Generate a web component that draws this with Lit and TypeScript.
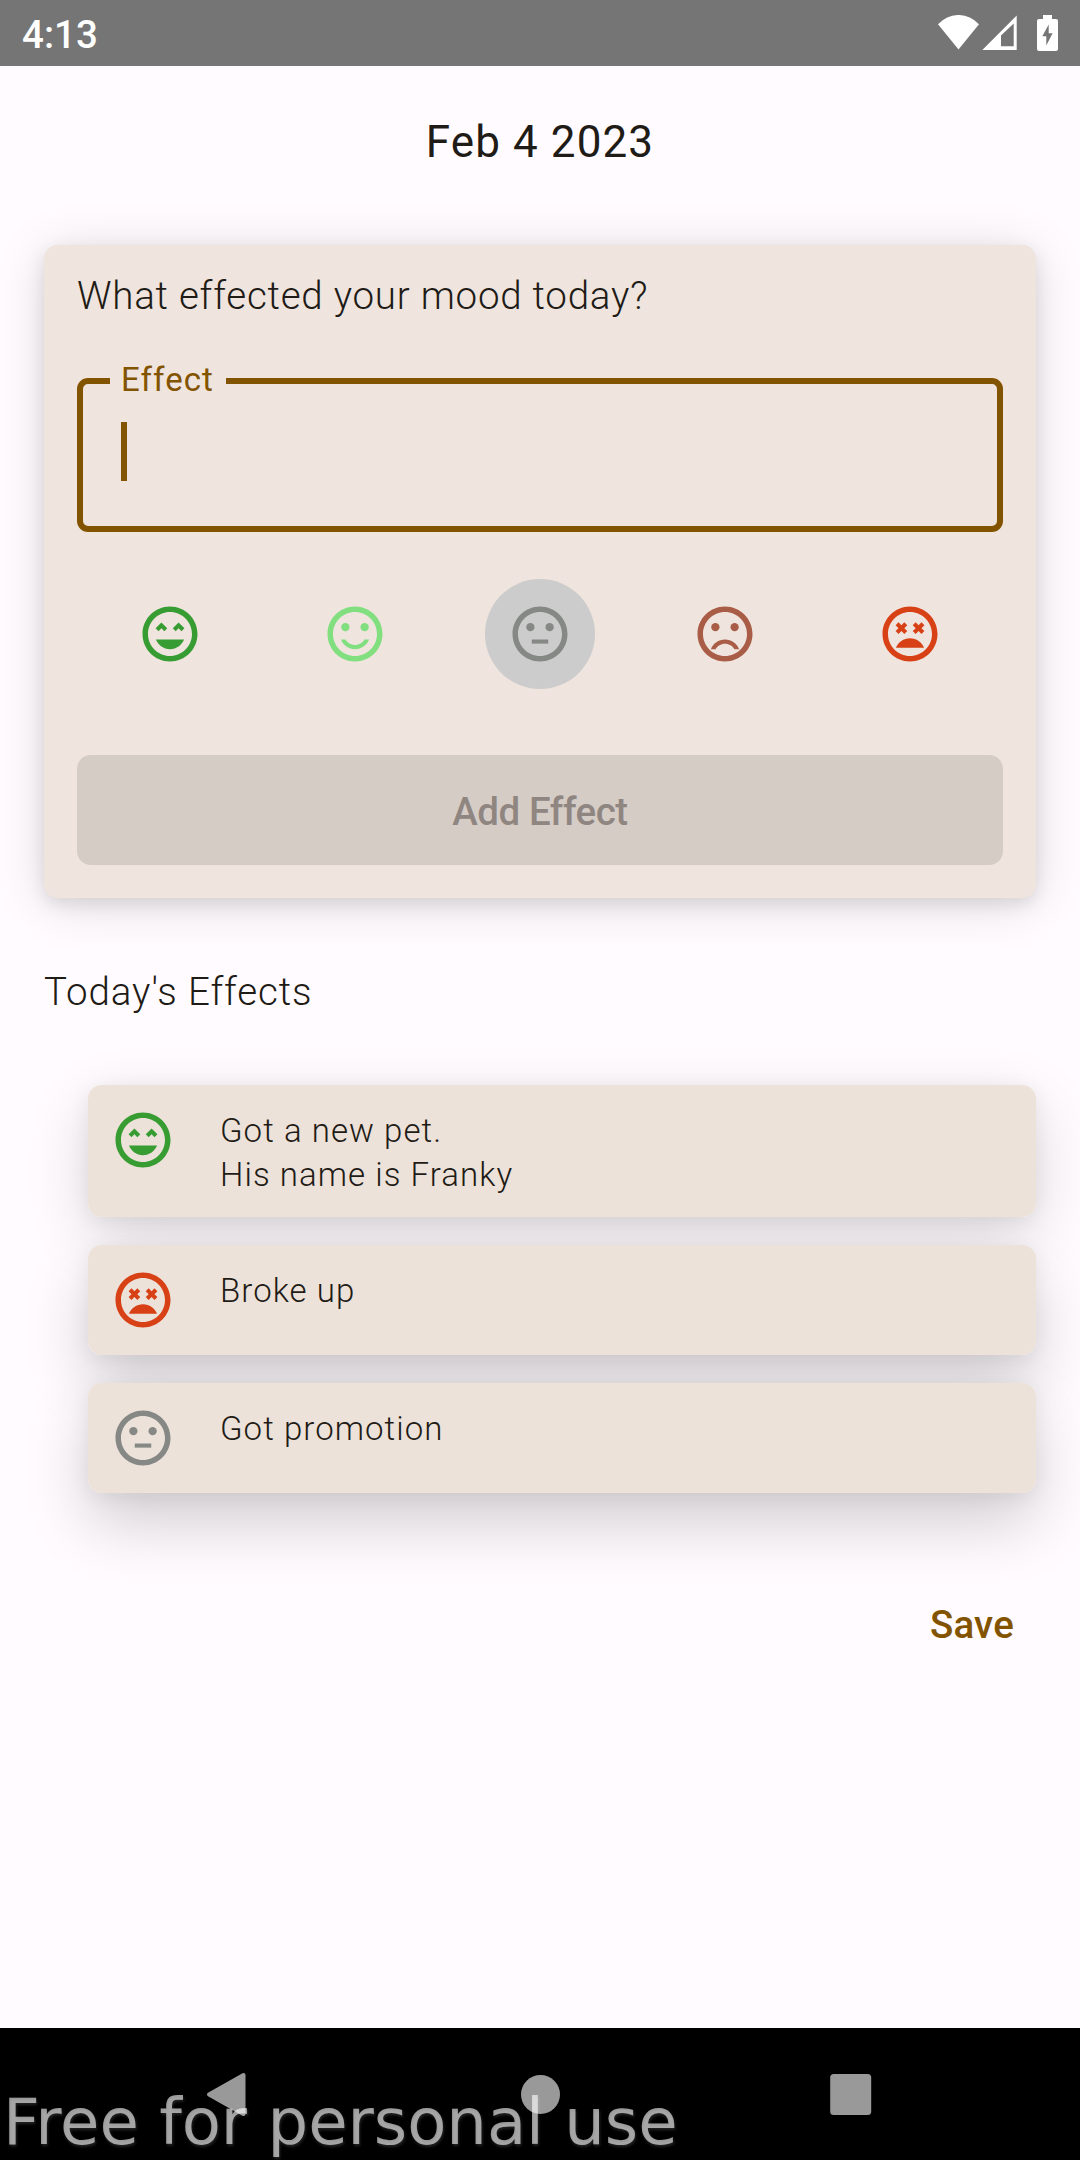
import { LitElement, html, css, svg } from "lit";
import { customElement, property, state } from "lit/decorators.js";
import { classMap } from "lit/directives/class-map.js";

type Mood = "great" | "good" | "neutral" | "bad" | "awful";

const MOODS: Mood[] = ["great", "good", "neutral", "bad", "awful"];

const roundEyes = svg`<circle cx="8.5" cy="9.5" r="1.5"/><circle cx="15.5" cy="9.5" r="1.5"/>`;

const FEATURES = {
  great: svg`<path d="M8.88 7.82L11 9.94 9.94 11 8.88 9.94 7.82 11 6.76 9.94zM13 9.94l2.12-2.12 2.12 2.12L16.18 11l-1.06-1.06L14.06 11zM12 17.5c2.33 0 4.31-1.46 5.11-3.5H6.89c.8 2.04 2.78 3.5 5.11 3.5z"/>`,
  good: svg`${roundEyes}<path d="M12 16c-1.48 0-2.75-.81-3.45-2H6.88c.8 2.05 2.79 3.5 5.12 3.5s4.32-1.45 5.12-3.5h-1.67c-.7 1.19-1.97 2-3.45 2z"/>`,
  neutral: svg`${roundEyes}<path d="M9 14h6v1.5H9z"/>`,
  bad: svg`${roundEyes}<path d="M12 14c-2.33 0-4.32 1.45-5.12 3.5h1.67c.69-1.19 1.97-2 3.45-2s2.75.81 3.45 2h1.67c-.8-2.05-2.79-3.5-5.12-3.5z"/>`,
  awful: svg`<path d="M12 13.5c-2.33 0-4.31 1.46-5.11 3.5h10.22c-.8-2.04-2.78-3.5-5.11-3.5zM7.82 12l1.06-1.06L9.94 12 11 10.94 9.94 9.88 11 8.82 9.94 7.76 8.88 8.82 7.82 7.76 6.76 8.82l1.06 1.06-1.06 1.06zM16.18 7.76l-1.06 1.06-1.06-1.06L13 8.82l1.06 1.06L13 10.94 14.06 12l1.06-1.06L16.18 12l1.06-1.06-1.06-1.06 1.06-1.06z"/>`,
};

@customElement("mood-face")
export class MoodFace extends LitElement {
  @property() mood: Mood = "neutral";

  static styles = css`
    :host { display: block; width: 66px; height: 66px; flex: none; }
    .face { display: block; width: 66px; height: 66px; }
    .great { fill: #379c31; }
    .good { fill: #81df7f; }
    .neutral { fill: #858884; }
    .bad { fill: #a95d46; }
    .awful { fill: #d84116; }
  `;

  render() {
    return html`<svg class="face ${this.mood}" viewBox="0 0 24 24">
      <path d="M12 2C6.47 2 2 6.47 2 12s4.47 10 10 10 10-4.47 10-10S17.53 2 12 2zm0 18c-4.42 0-8-3.58-8-8s3.58-8 8-8 8 3.58 8 8-3.58 8-8 8z"/>
      ${FEATURES[this.mood]}
    </svg>`;
  }
}

@customElement("status-bar")
export class StatusBar extends LitElement {
  static styles = css`
    :host { display: flex; align-items: center; height: 66px; padding: 0 22px; background: #757575; color: #fff; box-sizing: border-box; }
    .time { flex: 1; font: 500 38.5px/66px Roboto, sans-serif; padding-top: 3px; }
    .icons { display: flex; height: 36px; }
    .wifi { width: 41px; height: 36px; margin-right: 3px; }
    .cell { width: 35px; height: 36px; margin-right: 20px; }
    .battery { width: 21px; height: 36px; }
    .icons svg { fill: #fff; fill-rule: evenodd; }
  `;

  render() {
    return html`
      <div class="time">4:13</div>
      <div class="icons">
        <svg class="wifi" viewBox="0 0 41 36"><path d="M0 9.3A27.2 27.2 0 0 1 41 9.3L20.5 34.5z"/></svg>
        <svg class="cell" viewBox="0 0 35 36"><path d="M.3 35L34.7 .5V35zM19 20.5V31.2H31.7V8.5z"/></svg>
        <svg class="battery" viewBox="0 0 21 36"><path d="M6 0H15V4H19Q21 4 21 6V34Q21 36 19 36H2Q0 36 0 34V6Q0 4 2 4H6zM11.7 9.5L5.3 21.3H9.3V30.5L15.6 18.3H11.7z"/></svg>
      </div>`;
  }
}

@customElement("navigation-bar")
export class NavigationBar extends LitElement {
  static styles = css`
    :host { display: grid; grid-template-columns: 310px 1fr 310px; align-items: center; justify-items: center; position: relative; height: 132px; padding: 0 75px; box-sizing: border-box; background: #000; overflow: hidden; }
    .key { display: block; width: 46px; height: 46px; fill: #999; stroke: #999; stroke-linejoin: round; }
    .back { margin-left: -9px; }
    .watermark { position: absolute; left: 3px; top: 57px; font: 64px/75px "DejaVu Sans", sans-serif; color: rgba(255, 255, 255, 0.6); white-space: nowrap; text-shadow: 1px 2px 3px rgba(255, 255, 255, 0.14); }
  `;

  render() {
    return html`
      <svg class="key back" viewBox="0 0 46 46"><path stroke-width="4" d="M6 23.5L40.5 4V43z"/></svg>
      <svg class="key" viewBox="0 0 46 46"><circle cx="23.5" cy="23.5" r="19.5" stroke="none"/></svg>
      <svg class="key" viewBox="0 0 46 46"><rect x="3.2" y="3" width="41" height="41" rx="3.5" stroke="none"/></svg>
      <div class="watermark">Free for personal use</div>`;
  }
}

@customElement("app-root")
export class AppRoot extends LitElement {
  @state() private selected: Mood = "neutral";

  private effects: { mood: Mood; text: string }[] = [
    { mood: "great", text: "Got a new pet.\nHis name is Franky" },
    { mood: "awful", text: "Broke up" },
    { mood: "neutral", text: "Got promotion" },
  ];

  static styles = css`
    :host { display: flex; flex-direction: column; width: 1080px; height: 2160px; background: #fffbff; color: #1f1b16; font-family: Roboto, sans-serif; overflow: hidden; }
    .content { flex: 1; display: flex; flex-direction: column; padding: 46px 44px 0; }
    .date { text-align: center; font-size: 44px; line-height: 60px; letter-spacing: 1.1px; }
    .card { margin-top: 73px; height: 653px; box-sizing: border-box; padding: 29px 33px 33px; border-radius: 14px; background: #efe4de; display: flex; flex-direction: column; box-shadow: 0 6px 18px rgba(0, 0, 6, 0.1), 0 6px 52px rgba(0, 0, 6, 0.13); }
    .title { font-size: 38.5px; font-weight: 300; line-height: 44px; letter-spacing: 0.77px; }
    .field { position: relative; margin-top: 60px; height: 154px; box-sizing: border-box; border: 6px solid #835400; border-radius: 11px; padding: 38px; }
    .label { position: absolute; left: 27px; top: -24px; padding: 0 12px 0 11px; background: #efe4de; color: #835400; font-size: 33px; line-height: 40px; letter-spacing: 1.05px; }
    .caret { width: 5.5px; height: 59px; background: #835400; }
    .moods { display: grid; grid-template-columns: repeat(5, 1fr); justify-items: center; margin-top: 47px; }
    .mood { display: grid; place-items: center; width: 110px; height: 110px; border-radius: 50%; }
    .mood.selected { background: #ccc; }
    .add { margin-top: 66px; height: 110px; box-sizing: border-box; padding-top: 3px; display: grid; place-items: center; border-radius: 14px; background: #d5ccc6; color: #8f8681; font-size: 38.5px; font-weight: 500; line-height: 44px; letter-spacing: -0.48px; }
    .section { margin-top: 72px; letter-spacing: 0.87px; }
    .list { display: flex; flex-direction: column; gap: 28px; margin: 71px 0 0 44px; position: relative; z-index: 0; }
    .item { position: relative; display: flex; align-items: flex-start; gap: 44px; padding: 22px; border-radius: 14px; background: #ede2d9; }
    .item::before { content: ""; position: absolute; inset: 0; z-index: -1; border-radius: 14px; box-shadow: 0 4px 20px rgba(0, 0, 6, 0.06), 0 30px 64px rgba(0, 0, 6, 0.18); }
    .item:first-child::before { box-shadow: 0 4px 20px rgba(0, 0, 6, 0.07), 0 20px 64px rgba(0, 0, 6, 0.14); }
    .note { padding-top: 2px; margin-bottom: -2px; white-space: pre-line; font-size: 33px; font-weight: 300; line-height: 44px; letter-spacing: 1.05px; }
    .save { align-self: flex-end; margin: 110px 22px 0 0; color: #835400; font-size: 38.5px; font-weight: 500; line-height: 44px; letter-spacing: 0.2px; }
  `;

  render() {
    return html`
      <status-bar></status-bar>
      <div class="content">
        <div class="date">Feb 4 2023</div>
        <div class="card">
          <div class="title">What effected your mood today?</div>
          <div class="field">
            <div class="label">Effect</div>
            <div class="caret"></div>
          </div>
          <div class="moods">
            ${MOODS.map(
              (m) => html`<div class=${classMap({ mood: true, selected: m === this.selected })} @click=${() => (this.selected = m)}>
                <mood-face .mood=${m}></mood-face>
              </div>`,
            )}
          </div>
          <div class="add">Add Effect</div>
        </div>
        <div class="title section">Today's Effects</div>
        <div class="list">
          ${this.effects.map(
            (e) => html`<div class="item"><mood-face .mood=${e.mood}></mood-face><div class="note">${e.text}</div></div>`,
          )}
        </div>
        <div class="save">Save</div>
      </div>
      <navigation-bar></navigation-bar>`;
  }
}
